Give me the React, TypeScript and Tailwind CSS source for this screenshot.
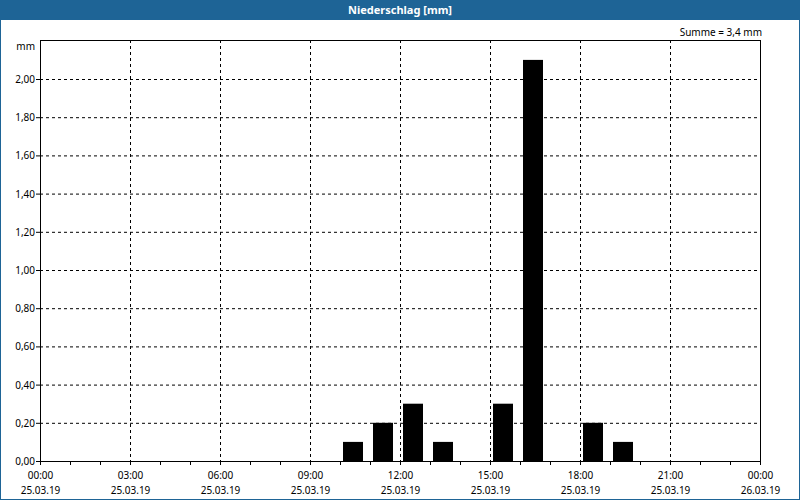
export default function App() {
  const X0 = 40, Y0 = 461, PX = 30.0, PY = 191;
  const bars: [number, number][] = [[10,0.1],[11,0.2],[12,0.3],[13,0.1],[15,0.3],[16,2.1],[18,0.2],[19,0.1]];
  const ys = [0,0.2,0.4,0.6,0.8,1.0,1.2,1.4,1.6,1.8,2.0];
  const xs = [0,3,6,9,12,15,18,21,24];
  const t = "text-[10px]";
  return (
    <div className="w-[800px] h-[500px] flex flex-col bg-white border-x border-b border-[#1e6496] font-['DejaVu_Sans',sans-serif]">
      <div className="h-[20px] bg-[#1e6496] text-white text-[11px] font-bold flex items-center justify-center">Niederschlag [mm]</div>
      <svg width="798" height="479" viewBox="1 20 798 479" className="block">
        <text x={762} y={36} textAnchor="end" className={t}>Summe = 3,4 mm</text>
        <text x={35} y={50} textAnchor="end" className={t}>mm</text>
        {ys.map((v) => {
          const y = Y0 - v * PY;
          return (
            <g key={v}>
              {v > 0 && <line x1={X0} x2={760} y1={y + 0.5} y2={y + 0.5} stroke="#000" strokeDasharray="3 3" />}
              <line x1={X0 - 4} x2={X0} y1={y + 0.5} y2={y + 0.5} stroke="#000" />
              <text x={35} y={y + 4} textAnchor="end" className={t}>{v.toFixed(2).replace('.', ',')}</text>
            </g>
          );
        })}
        {xs.map((h) => {
          const x = Math.round(X0 + h * PX) + 0.5;
          return (
            <g key={h}>
              {h > 0 && h < 24 && <line x1={x} x2={x} y1={40} y2={Y0} stroke="#000" strokeDasharray="3 3" />}
              <text x={x} y={479} textAnchor="middle" className={t}>{String(h % 24).padStart(2, '0')}:00</text>
              <text x={x} y={494} textAnchor="middle" className={t}>{h === 24 ? '26.03.19' : '25.03.19'}</text>
            </g>
          );
        })}
        {Array.from({ length: 25 }, (_, h) => (
          <line key={h} x1={X0 + h * PX + 0.5} x2={X0 + h * PX + 0.5} y1={Y0} y2={Y0 + 4} stroke="#000" />
        ))}
        {bars.map(([h, v]) => (
          <rect key={h} x={X0 + h * PX + 3} y={Y0 - v * PY} width={20} height={v * PY} fill="#000" />
        ))}
        <rect x={X0 + 0.5} y={40.5} width={720} height={Y0 - 40} fill="none" stroke="#000" />
      </svg>
    </div>
  );
}
